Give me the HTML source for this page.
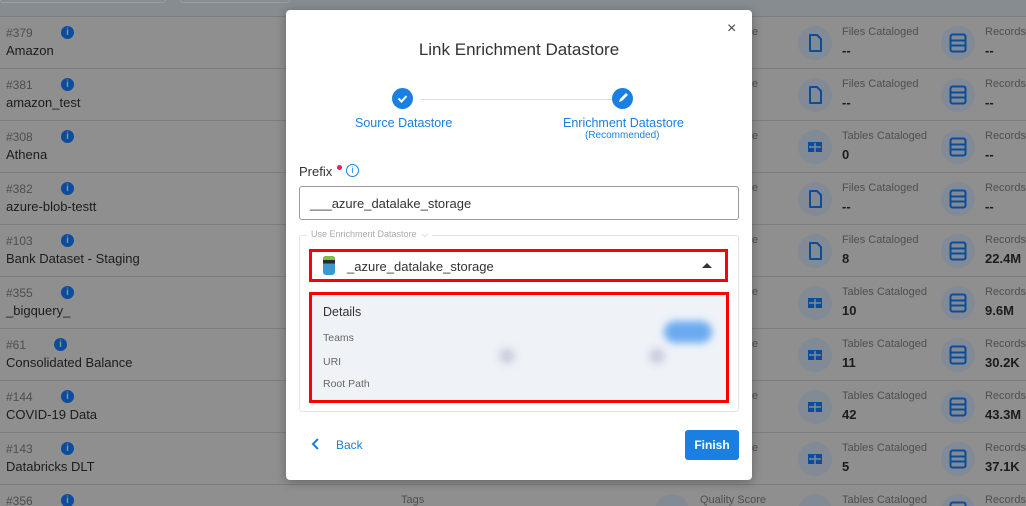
<!DOCTYPE html>
<html><head><meta charset="utf-8"><style>
*{margin:0;padding:0;box-sizing:border-box}
html,body{width:1026px;height:506px;overflow:hidden}
body{background:#8f8f8f;font-family:"Liberation Sans",sans-serif;position:relative}
#wrap{position:absolute;left:0;top:0;width:1026px;height:506px;overflow:hidden}
.a{position:absolute;white-space:nowrap}
.top{left:0;top:0;width:1026px;height:16px;background:#878c91}
.row{position:absolute;left:0;width:1026px;height:52px;border-top:1px solid #7d7d7d}
.id{left:6px;top:9px;font-size:12px;color:#4e4e4e}
.nm{left:6px;top:26px;font-size:13px;color:#1c1c1c}
.inf{top:9px;width:13px;height:13px;border-radius:50%;background:#0b4d9b;color:#8f8f8f;font-size:10px;font-weight:bold;text-align:center;line-height:13px}
.circ{width:34px;height:34px;border-radius:50%;background:#818a95;top:9px}
.lb{font-size:11px;color:#4f4f4f;top:9px}
.vl{font-size:13px;color:#1c1c1c;top:26px;font-weight:bold}
.modal{left:286px;top:10px;width:466px;height:470px;background:#fff;border-radius:4px;box-shadow:0 2px 10px rgba(0,0,0,.3)}
.blue{color:#1a7fe0}
</style></head><body>
<div id="wrap">
<div class="a top"><div class="a" style="left:0;top:0;width:166px;height:3px;border:1px solid #9a9ea2;border-top:none;border-radius:0 0 4px 4px"></div><div class="a" style="left:180px;top:0;width:110px;height:3px;border:1px solid #9a9ea2;border-top:none;border-radius:0 0 4px 4px"></div></div>

<div id="rows"></div>
<script>
var d=[["#379","Amazon","F","Files Cataloged","--","--"],["#381","amazon_test","F","Files Cataloged","--","--"],["#308","Athena","T","Tables Cataloged","0","--"],["#382","azure-blob-testt","F","Files Cataloged","--","--"],["#103","Bank Dataset - Staging","F","Files Cataloged","8","22.4M"],["#355","_bigquery_","T","Tables Cataloged","10","9.6M"],["#61","Consolidated Balance","T","Tables Cataloged","11","30.2K"],["#144","COVID-19 Data","T","Tables Cataloged","42","43.3M"],["#143","Databricks DLT","T","Tables Cataloged","5","37.1K"],["#356","","T","Tables Cataloged","",""]];
var fi='<svg width="34" height="34" viewBox="0 0 34 34"><path d="M12 9h7l4 4v12h-11z" fill="none" stroke="#0b4d9b" stroke-width="2" stroke-linejoin="round"/></svg>';
var ti='<svg width="34" height="34" viewBox="0 0 34 34"><rect x="10" y="12" width="14" height="10" fill="#0b4d9b"/><path d="M11 17h12M17 13v9" stroke="#818a95" stroke-width="1.5"/></svg>';
var ri='<svg width="34" height="34" viewBox="0 0 34 34"><rect x="9.5" y="8.5" width="15" height="17" rx="2" fill="none" stroke="#0b4d9b" stroke-width="2"/><path d="M10 14.5h14M10 19.5h14" stroke="#0b4d9b" stroke-width="2"/></svg>';
var h='';
d.forEach(function(r,i){var t=16+52*i;var w=r[0].length*7+10;
h+='<div class="row" style="top:'+t+'px;'+(i==9?'height:22px;overflow:hidden':'')+'"><div class="a id">'+r[0]+'</div><div class="a inf" style="left:'+(w+23)+'px">i</div><div class="a nm">'+r[1]+'</div>'+
(i==9?'':'<div class="a lb" style="left:752px">e</div>')+
'<div class="a circ" style="left:798px">'+(r[2]=="F"?fi:ti)+'</div><div class="a lb" style="left:842px">'+r[3]+'</div><div class="a vl" style="left:842px">'+r[4]+'</div>'+
'<div class="a circ" style="left:941px">'+ri+'</div><div class="a lb" style="left:985px">Records I</div><div class="a vl" style="left:985px">'+r[5]+'</div>'+
(i==9?'<div class="a lb" style="left:401px">Tags</div><div class="a circ" style="left:655px"></div><div class="a lb" style="left:700px">Quality Score</div>':'')+'</div>';});
document.getElementById('rows').innerHTML=h;
</script>

<div class="a modal">
<div class="a" style="left:441px;top:10px;font-size:16px;color:#444">×</div>
<div class="a" style="left:0;width:466px;top:30px;text-align:center;font-size:17px;color:#333">Link Enrichment Datastore</div>
<div class="a" style="left:135px;top:89px;width:192px;height:1px;background:#ddd"></div>
<div class="a" style="left:106px;top:78px;width:21px;height:21px;border-radius:50%;background:#1a7fe0"><svg width="21" height="21"><path d="M6.5 10.5l3 3 5-5.5" fill="none" stroke="#fff" stroke-width="2"/></svg></div>
<div class="a" style="left:326px;top:78px;width:21px;height:21px;border-radius:50%;background:#1a7fe0"><svg width="21" height="21"><path d="M7 14l1-3 6-6 2 2-6 6z" fill="#fff"/></svg></div>
<div class="a blue" style="left:69px;top:106px;font-size:12.5px">Source Datastore</div>
<div class="a blue" style="left:277px;top:106px;font-size:12.5px">Enrichment Datastore</div>
<div class="a blue" style="left:299px;top:120px;font-size:10px">(Recommended)</div>
<div class="a" style="left:13px;top:154px;font-size:13px;color:#333">Prefix</div>
<div class="a" style="left:51px;top:155px;width:5px;height:5px;border-radius:50%;background:#e0245e"></div>
<div class="a" style="left:60px;top:154px;width:13px;height:13px;border:1.3px solid #1a7fe0;border-radius:50%;color:#1a7fe0;font-size:9px;text-align:center;line-height:11px">i</div>
<div class="a" style="left:13px;top:176px;width:440px;height:34px;border:1px solid #999;border-radius:3px;font-size:13px;color:#333;padding:9px 0 0 10px">___azure_datalake_storage</div>
<div class="a" style="left:13px;top:225px;width:440px;height:177px;border:1px solid #e3e3e3;border-radius:3px"></div>
<div class="a" style="left:21px;top:219px;background:#fff;padding:0 4px;font-size:9px;color:#aaa">Use Enrichment Datastore &nbsp;⌵</div>
<div class="a" style="left:23px;top:239px;width:419px;height:33px;border:3px solid #f00"></div>
<div class="a" style="left:37px;top:246px;width:12px;height:19px;border-radius:3px;background:linear-gradient(#2b2b2b 40%,#3a9ad0 40%)"><div style="height:4px;background:#7cc242;border-radius:3px 3px 0 0"></div></div>
<div class="a" style="left:61px;top:249px;font-size:13px;color:#333">_azure_datalake_storage</div>
<div class="a" style="left:416px;top:253px;width:0;height:0;border-left:5px solid transparent;border-right:5px solid transparent;border-bottom:5px solid #333"></div>
<div class="a" style="left:23px;top:282px;width:420px;height:111px;border:3px solid #f00;background:#eff3f8"></div>
<div class="a" style="left:37px;top:295px;font-size:12.5px;color:#333">Details</div>
<div class="a" style="left:37px;top:322px;font-size:10.5px;color:#666">Teams</div>
<div class="a" style="left:37px;top:346px;font-size:10.5px;color:#666">URI</div>
<div class="a" style="left:37px;top:368px;font-size:10.5px;color:#666">Root Path</div>
<div class="a" style="left:378px;top:311px;width:48px;height:22px;border-radius:11px;background:#6aaaf0;filter:blur(4px)"></div>
<div class="a" style="left:213px;top:338px;width:16px;height:16px;border-radius:50%;background:#ccd;filter:blur(4px)"></div>
<div class="a" style="left:363px;top:338px;width:16px;height:16px;border-radius:50%;background:#ccd;filter:blur(4px)"></div>
<svg class="a" style="left:25px;top:427px" width="10" height="14"><path d="M7 2L2 7l5 5" fill="none" stroke="#1a7fe0" stroke-width="2"/></svg>
<div class="a blue" style="left:50px;top:428px;font-size:12px">Back</div>
<div class="a" style="left:399px;top:420px;width:54px;height:30px;background:#1a7fe0;border-radius:3px;color:#fff;font-size:12px;font-weight:bold;text-align:center;line-height:30px">Finish</div>
</div>
</div>
</body></html>
